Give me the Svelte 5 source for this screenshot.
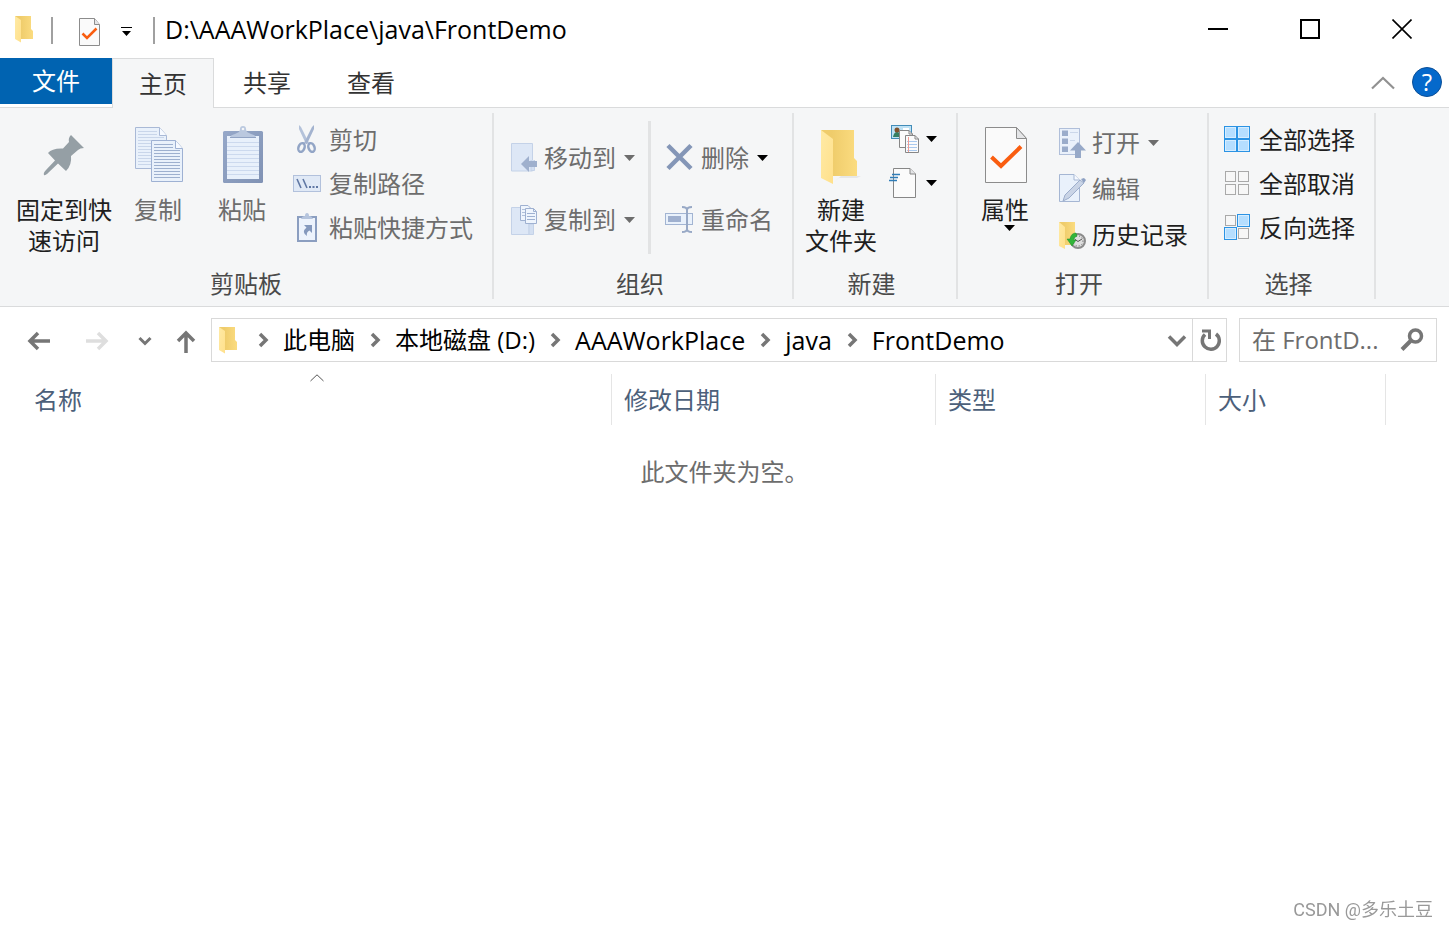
<script lang="ts">
	type Item = { icon: string; label: string; menu?: boolean; off?: boolean };

	const clipboardItems: Item[] = [
		{ icon: 'cut', label: '剪切', off: true },
		{ icon: 'path', label: '复制路径', off: true },
		{ icon: 'shortcut', label: '粘贴快捷方式', off: true }
	];
	const moveItems: Item[] = [
		{ icon: 'move', label: '移动到', menu: true, off: true },
		{ icon: 'copyto', label: '复制到', menu: true, off: true }
	];
	const openItems: Item[] = [
		{ icon: 'open', label: '打开', menu: true, off: true },
		{ icon: 'edit', label: '编辑', off: true },
		{ icon: 'history', label: '历史记录' }
	];
	const selectItems: Item[] = [
		{ icon: 'all', label: '全部选择' },
		{ icon: 'none', label: '全部取消' },
		{ icon: 'invert', label: '反向选择' }
	];

	const crumbs = ['此电脑', '本地磁盘 (D:)', 'AAAWorkPlace', 'java', 'FrontDemo'];
	const tabs = ['主页', '共享', '查看'];

	let activeTab = $state('主页');
	let query = $state('');

	const isLatin = (text: string) => /^[\w ]+$/.test(text);
</script>

{#snippet folder()}
	<svg class="folder" viewBox="0 0 20 28" aria-hidden="true">
		<path d="M1 1H17V14L19 16V24H6z" fill="url(#folder-back)" />
		<path d="M1 1L7 5V27.500L1 24z" fill="url(#folder-front)" />
	</svg>
{/snippet}

{#snippet arrow()}
	<svg class="arrow" viewBox="0 0 11 6" aria-hidden="true">
		<path d="M0 0H11L5.500 6z" fill="currentColor" />
	</svg>
{/snippet}

{#snippet square(x: number, y: number, on: boolean)}
	{#if on}
		<rect x={x - 1} y={y - 1} width="12" height="12" fill="#b5deff" stroke="#2b93e4" />
		<rect {x} {y} width="10" height="10" fill="none" stroke="#d6edff" />
	{:else}
		<rect {x} {y} width="10" height="10" fill="#f7f7f7" stroke="#a9a9a9" />
	{/if}
{/snippet}

{#snippet bigIcon(name: string)}
	<svg class="big-icon" viewBox="0 0 64 64" aria-hidden="true">
		{#if name === 'pin'}
			<path
				d="M39 12L52 25Q48 25 46 27L39 33Q40 42 34 48L26 40.500L15 51Q12 53 12 52Q11 50 14 47L23 37.500L16 30Q20 25 31 25.500L37 19Q36 15 39 12z"
				fill="#959fa5"
			/>
		{:else if name === 'copy'}
			<path d="M9.500 4.500H33.500L40.500 12.500V45.500H9.500z" fill="#e9f1fb" stroke="#a9b9d6" />
			<path d="M33.500 4.500V12.500H40.500" fill="#f7faff" stroke="#a9b9d6" />
			<path d="M12 8.500H31M12 11.500H31M12 14.500H38M12 17.500H38M12 20.500H38M12 23.500H38M12 26.500H38M12 29.500H38M12 32.500H38M12 35.500H38M12 38.500H38M12 41.500H38" stroke="#c9d6ea" />
			<path d="M25.500 17.500H49.500L56.500 25.500V58.500H25.500z" fill="#e9f1fb" stroke="#9eb1d3" />
			<path d="M49.500 17.500V25.500H56.500" fill="#f7faff" stroke="#9eb1d3" />
			<path d="M28 21.500H47M28 24.500H47M28 27.500H54M28 30.500H54M28 33.500H54M28 36.500H54M28 39.500H54M28 42.500H54M28 45.500H54M28 48.500H54M28 51.500H54M28 54.500H54" stroke="#9db0cf" />
		{:else if name === 'paste'}
			<rect x="13" y="8" width="40" height="52" rx="1.500" fill="url(#board)" />
			<rect x="17" y="13" width="32" height="43" fill="#e8f0fb" />
			<path d="M17 19.500H49M17 23.500H49M17 27.500H49M17 31.500H49M17 35.500H49M17 39.500H49M17 43.500H49M17 47.500H49M17 51.500H49" stroke="#ccd9ee" />
			<path d="M20 15Q20 12 25 11L29 9Q30 7 30 6A3 3 0 0 1 36 6Q36 7 37 9L41 11Q46 12 46 15z" fill="#bac8df" />
			<path d="M20 14.500H46" stroke="#91a3c4" />
			<circle cx="33" cy="6" r="1.300" fill="#f5f6f7" />
		{:else if name === 'folder'}
			<path d="M24 60L32 53H52L48 55H30z" fill="#d8d8d8" opacity=".5" />
			<path d="M12 7H45V35L48 38V53H23z" fill="url(#folder-back)" />
			<path d="M12 7L24 16V61L12 55z" fill="url(#folder-front)" />
		{:else}
			<path d="M12.500 4.500H43.500L53.500 15.500V59.500H12.500z" fill="#fafafa" stroke="#8c8c8c" />
			<path d="M43.500 4.500V15.500H53.500z" fill="#e4e5e7" stroke="#8c8c8c" />
			<path d="M18.500 34L28 43L48 23.500" fill="none" stroke="#f95d10" stroke-width="4" />
		{/if}
	</svg>
{/snippet}

{#snippet smallIcon(name: string)}
	<svg class="small-icon" viewBox="0 0 30 30" aria-hidden="true">
		{#if name === 'cut'}
			<path d="M6 0L8 2L16 18L13 19L6 4z" fill="#b4c2da" />
			<path d="M21 0L19 2L11 18L14 19L21 4z" fill="#a3b3cf" />
			<ellipse cx="8.500" cy="22.500" rx="3" ry="4.500" transform="rotate(20 8.500 22.500)" fill="none" stroke="#92a5c6" stroke-width="2.500" />
			<ellipse cx="18.500" cy="22.500" rx="3" ry="4.500" transform="rotate(-20 18.500 22.500)" fill="none" stroke="#92a5c6" stroke-width="2.500" />
		{:else if name === 'path'}
			<rect x=".5" y="6.500" width="27" height="16" fill="#e0e9f6" stroke="#b2c1dc" />
			<path d="M4 10L8 19M10 10L14 19" stroke="#5f77a3" stroke-width="1.600" />
			<path d="M16 18H18M19.500 18H21.500M23 18H25" stroke="#5f77a3" stroke-width="2" />
		{:else if name === 'shortcut'}
			<rect x="5" y="4" width="18" height="24" fill="#edf3fc" stroke="#8b9ec0" stroke-width="2" />
			<path d="M8 6Q9 3 12 3Q12 0 14 0Q16 0 16 3Q19 3 20 6z" fill="#b5c4dd" />
			<path d="M11 12H19V20L16.500 17.500Q13 19 14 23Q8 19 13.500 14.500z" fill="#8599bd" />
		{:else if name === 'move'}
			<path d="M3.500 .5H24.500V28H3.500z" fill="#dde7f6" stroke="#c4d2e8" />
			<path d="M23 17V27.500H26.500V17" fill="#d3dff1" stroke="#c4d2e8" />
			<path d="M13 21L21 13V18H29V24H21V29z" fill="#9fb0cd" />
		{:else if name === 'copyto'}
			<path d="M3.500 2.500H21V29.500H3.500z" fill="#dde7f6" stroke="#c4d2e8" />
			<path d="M21 19H25.500V29.500H21z" fill="#d3dff1" stroke="#c4d2e8" />
			<path d="M12.500 .5H20L23.500 4V15.500H12.500z" fill="#eff5fd" stroke="#9fb1d1" />
			<path d="M14 4.500H18M14 7.500H18M14 10.500H18" stroke="#b1c0da" />
			<path d="M17.500 3.500H25.500L28.500 6.500V18.500H17.500z" fill="#eff5fd" stroke="#9fb1d1" />
			<path d="M25.500 3.500V6.500H28.500M19 8.500H27M19 11.500H27M19 14.500H27" fill="none" stroke="#9fb1d1" />
		{:else if name === 'delete'}
			<path d="M3 2.500L26 25.500M26 2.500L3 25.500" stroke="#8496b7" stroke-width="4.500" />
		{:else if name === 'rename'}
			<rect x=".5" y="8.500" width="27" height="11" fill="#e9f1fb" stroke="#a2b4d2" />
			<rect x="3" y="11" width="13" height="6" fill="#9fb0cf" />
			<path d="M17 2Q22 2 22 5Q22 2 27 2M22 4V25M17 27Q22 27 22 24Q22 27 27 27" fill="none" stroke="#98a9c6" stroke-width="2" />
		{:else if name === 'newitem'}
			<rect x="2.500" y="1.500" width="20" height="13" fill="#bfe2f5" stroke="#428cb8" />
			<path d="M4 13Q5 8 8 8Q11 8 12 13z" fill="#357f63" />
			<circle cx="8" cy="6" r="2.500" fill="#80522e" />
			<path d="M14 5H20" stroke="#fff" stroke-width="2" />
			<path d="M10.500 6.500H20L23.500 10V23.500H10.500z" fill="#fbfbfb" stroke="#878787" />
			<path d="M20 6.500V10H23.500" fill="none" stroke="#878787" />
			<path d="M16.500 11.500H26L29.500 15V28.500H16.500z" fill="#fbfbfb" stroke="#878787" />
			<path d="M26 11.500V15H29.500" fill="none" stroke="#878787" />
			<path d="M18 17.500H28M18 20.500H28M18 23.500H28M18 26.500H28" stroke="#a9c9ee" />
			<path d="M19.500 13V28" stroke="#ef9b93" />
		{:else if name === 'easy'}
			<path d="M4.500 .5H21L26.500 6V29.500H4.500z" fill="#fbfbfb" stroke="#878787" />
			<path d="M21 .5V6H26.500" fill="#e4e5e7" stroke="#878787" />
			<path d="M3 6.500H11M1 9.500H9M0 12.500H8" stroke="#2f7db8" stroke-width="1.600" />
		{:else if name === 'open'}
			<rect x="3.500" y=".5" width="20" height="26" fill="#eaf1fb" stroke="#b0bfda" />
			<path d="M6 2.500H12V8H6zM6 10.500H12V16H6zM6 18.500H12V24H6z" fill="#9aaccb" />
			<path d="M14 4.500H22M14 12.500H19" stroke="#cbd7ea" />
			<path d="M22 14L30 22.500H25V30H19V22.500H14z" fill="#97a9c8" />
		{:else if name === 'edit'}
			<path d="M3.500 .5H18L23.500 6V27.500H3.500z" fill="#e9f1fb" stroke="#a5b6d3" />
			<path d="M18 .5V6H23.500" fill="#f7faff" stroke="#a5b6d3" />
			<path d="M7 27L9 21L24 6L28 9L13 24z" fill="#c9d4e6" stroke="#9cadcb" />
			<path d="M25 5L28 4L30 6L28 9z" fill="#8ea1c3" />
		{:else if name === 'history'}
			<path d="M3 2H19V25H8z" fill="url(#folder-back)" />
			<path d="M3 2L9 7V29L3 26z" fill="url(#folder-front)" />
			<circle cx="22" cy="21" r="7" fill="#dedede" stroke="#8b8b8b" stroke-width="2" />
			<circle cx="22" cy="21" r="5" fill="none" stroke="#666" stroke-dasharray="1 2" />
			<path d="M18.500 19L22 21.500L26 19" fill="none" stroke="#555" />
			<path d="M20 13Q15 13 14 19H11L16 26L20 20H17.500Q18 17 21 16z" fill="#32b53a" stroke="#188d25" stroke-width=".5" />
		{:else}
			{@render square(2.5, 2.5, name === 'all')}
			{@render square(15.5, 2.5, name !== 'none')}
			{@render square(2.5, 15.5, name !== 'none')}
			{@render square(15.5, 15.5, name === 'all')}
		{/if}
	</svg>
{/snippet}

{#snippet small(item: Item)}
	<button class="small" class:off={item.off} type="button">
		{@render smallIcon(item.icon)}
		<span>{item.label}</span>
		{#if item.menu}{@render arrow()}{/if}
	</button>
{/snippet}

{#snippet chevron()}
	<svg class="chevron" viewBox="0 0 12 16" aria-hidden="true">
		<path d="M2 2L8 8L2 14" fill="none" stroke="#767676" stroke-width="3.500" />
	</svg>
{/snippet}

<svg class="defs" aria-hidden="true">
	<defs>
		<linearGradient id="folder-back" x1="0" x2="1" y1="0" y2="0">
			<stop offset=".3" stop-color="#efcc6b" />
			<stop offset="1" stop-color="#fbdc80" />
		</linearGradient>
		<linearGradient id="folder-front" x1="0" x2="1" y1="0" y2="1">
			<stop offset="0" stop-color="#ffeaa5" />
			<stop offset="1" stop-color="#ffe08b" />
		</linearGradient>
		<linearGradient id="board" x1="0" x2="1" y1="0" y2="1">
			<stop offset="0" stop-color="#96a8c9" />
			<stop offset="1" stop-color="#8092b4" />
		</linearGradient>
	</defs>
</svg>

<div class="window">
	<header class="titlebar">
		{@render folder()}
		<span class="rule"></span>
		<button class="quick" type="button" aria-label="属性">
			<svg width="22" height="28" viewBox="0 0 22 28">
				<path d="M.5 .5H15.500L20.500 6.500V27.500H.5z" fill="#fafafa" stroke="#8c8c8c" />
				<path d="M15.500 .5V6.500H20.500" fill="#e4e5e7" stroke="#8c8c8c" />
				<path d="M3.500 15.500L8 20L17.500 10.500" fill="none" stroke="#f95d10" stroke-width="2.500" />
			</svg>
		</button>
		<button class="customize" type="button" aria-label="自定义快速访问工具栏">
			<svg width="12" height="10" viewBox="0 0 12 10"><path d="M0 0H11V1H0zM1 4H10L5.500 9z" /></svg>
		</button>
		<span class="rule"></span>
		<h1>D:\AAAWorkPlace\java\FrontDemo</h1>
		<div class="controls">
			<button type="button" aria-label="最小化">
				<svg width="20" height="20" viewBox="0 0 20 20"><path d="M0 10H20" stroke-width="2" /></svg>
			</button>
			<button type="button" aria-label="最大化">
				<svg width="20" height="20" viewBox="0 0 20 20"><path d="M1 1H19V19H1z" stroke-width="2" /></svg>
			</button>
			<button type="button" aria-label="关闭">
				<svg width="20" height="20" viewBox="0 0 20 20"><path d="M.5 .5L19.500 19.500M19.500 .5L.5 19.500" stroke-width="1.600" /></svg>
			</button>
		</div>
	</header>

	<nav class="tabs">
		<button class="file" type="button">文件</button>
		{#each tabs as tab}
			<button class="tab" class:active={tab === activeTab} type="button" onclick={() => (activeTab = tab)}>
				{tab}
			</button>
		{/each}
		<button class="collapse" type="button" aria-label="最小化功能区">
			<svg width="24" height="14" viewBox="0 0 24 14"><path d="M1 12.500L12 2L23 12.500" fill="none" stroke="#919191" stroke-width="2.200" /></svg>
		</button>
		<button class="help" type="button" aria-label="帮助">?</button>
	</nav>

	<div class="ribbon">
		<section class="group clipboard">
			<div class="items">
				<button class="big pin" type="button">{@render bigIcon('pin')}<span>固定到快<br />速访问</span></button>
				<button class="big off" type="button">{@render bigIcon('copy')}<span>复制</span></button>
				<button class="big off" type="button">{@render bigIcon('paste')}<span>粘贴</span></button>
				<div class="stack">
					{#each clipboardItems as item}{@render small(item)}{/each}
				</div>
			</div>
			<h2>剪贴板</h2>
		</section>

		<section class="group organize">
			<div class="items">
				<div class="stack wide">
					{#each moveItems as item}{@render small(item)}{/each}
				</div>
				<span class="split"></span>
				<div class="stack wide">
					<button class="small off" type="button">
						{@render smallIcon('delete')}
						<span>删除</span>
						<span class="ready">{@render arrow()}</span>
					</button>
					{@render small({ icon: 'rename', label: '重命名', off: true })}
				</div>
			</div>
			<h2>组织</h2>
		</section>

		<section class="group new">
			<div class="items">
				<button class="big" type="button">{@render bigIcon('folder')}<span>新建<br />文件夹</span></button>
				<div class="stack">
					<button class="small" type="button" aria-label="新建项目">{@render smallIcon('newitem')}{@render arrow()}</button>
					<button class="small" type="button" aria-label="轻松访问">{@render smallIcon('easy')}{@render arrow()}</button>
				</div>
			</div>
			<h2>新建</h2>
		</section>

		<section class="group open">
			<div class="items">
				<button class="big" type="button">
					{@render bigIcon('properties')}
					<span>属性</span>
					{@render arrow()}
				</button>
				<div class="stack loose">
					{#each openItems as item}{@render small(item)}{/each}
				</div>
			</div>
			<h2>打开</h2>
		</section>

		<section class="group select">
			<div class="items">
				<div class="stack">
					{#each selectItems as item}{@render small(item)}{/each}
				</div>
			</div>
			<h2>选择</h2>
		</section>
	</div>

	<div class="navbar">
		<button class="step" type="button" aria-label="后退">
			<svg width="24" height="20" viewBox="0 0 24 20"><path d="M11 2L3 10L11 18M3 10H23" fill="none" stroke="#767676" stroke-width="3.500" /></svg>
		</button>
		<button class="step" type="button" aria-label="前进">
			<svg width="24" height="20" viewBox="0 0 24 20"><path d="M13 2L21 10L13 18M21 10H1" fill="none" stroke="#dedede" stroke-width="3.500" /></svg>
		</button>
		<button class="recent" type="button" aria-label="最近浏览的位置">
			<svg width="14" height="10" viewBox="0 0 14 10"><path d="M1.500 2L7 7.500L12.500 2" fill="none" stroke="#767676" stroke-width="3" /></svg>
		</button>
		<button class="up" type="button" aria-label="上移">
			<svg width="20" height="24" viewBox="0 0 20 24"><path d="M2 12L10 4L18 12M10 4V24" fill="none" stroke="#767676" stroke-width="3.500" /></svg>
		</button>

		<div class="address">
			{@render folder()}
			{#each crumbs as crumb}
				{@render chevron()}
				<a class:latin={isLatin(crumb)} href="#{crumb}">{crumb}</a>
			{/each}
			<button class="history" type="button" aria-label="以前的位置">
				<svg width="20" height="14" viewBox="0 0 20 14"><path d="M2 3.500L10 11.500L18 3.500" fill="none" stroke="#767676" stroke-width="3.500" /></svg>
			</button>
			<button class="refresh" type="button" aria-label="刷新">
				<svg width="22" height="24" viewBox="0 0 22 24">
					<path d="M17 6A8.500 8.500 0 1 1 6 6.500" fill="none" stroke="#767676" stroke-width="3.500" />
					<path d="M3 3H10.500V11" fill="none" stroke="#767676" stroke-width="3" />
				</svg>
			</button>
		</div>

		<label class="search">
			<input type="text" aria-label="搜索" placeholder="在 FrontD..." bind:value={query} />
			<svg width="24" height="24" viewBox="0 0 24 24"><circle cx="15.500" cy="8" r="6" fill="none" stroke="#767676" stroke-width="3.500" /><path d="M11.500 12L2 21.500" stroke="#767676" stroke-width="4" /></svg>
		</label>
	</div>

	<table>
		<thead>
			<tr>
				<th class="name">
					名称
					<svg class="sort" width="14" height="8" viewBox="0 0 14 8"><path d="M.5 7L7 .8L13.500 7" fill="none" stroke="#555" /></svg>
				</th>
				<th class="date">修改日期</th>
				<th class="type">类型</th>
				<th class="size">大小</th>
				<td></td>
			</tr>
		</thead>
		<tbody>
			<tr><td class="empty" colspan="5">此文件夹为空。</td></tr>
		</tbody>
	</table>

	<div class="watermark">CSDN @多乐土豆</div>
</div>

<style>
	:global(body) {
		background: #fff;
	}
	.window {
		min-height: 100vh;
		font-family: 'Open Sans', 'Noto Sans CJK SC', sans-serif;
		font-size: 24px;
		line-height: 30px;
		color: #1e1e1e;
	}
	.defs {
		position: absolute;
		width: 0;
		height: 0;
	}
	button {
		border: none;
		background: none;
		padding: 0;
		font: inherit;
		color: inherit;
		white-space: nowrap;
	}
	svg {
		display: block;
		flex: none;
	}
	h1,
	h2 {
		margin: 0;
		font-size: 24px;
		font-weight: 400;
	}
	h1,
	.latin {
		font-size: 25px;
	}
	.folder {
		width: 20px;
		height: 28px;
	}
	.arrow {
		width: 11px;
		height: 6px;
	}

	.titlebar {
		display: flex;
		align-items: center;
		height: 58px;
		padding: 0 1px 0 14px;
		color: #000;
	}
	.rule {
		width: 2px;
		height: 27px;
		margin: 2px 10px 0 17px;
		background: #a0a0a0;
	}
	.quick {
		margin: 6px 4px 0 16px;
	}
	.customize {
		margin: 6px 3px 0 16px;
	}
	.controls {
		display: flex;
		align-self: stretch;
		margin-left: auto;
	}
	.controls button {
		display: grid;
		place-items: center;
		width: 92px;
	}
	.controls path {
		fill: none;
		stroke: #000;
	}

	.tabs {
		display: flex;
		align-items: flex-start;
		height: 50px;
		box-sizing: border-box;
		border-bottom: 1px solid #dadbdc;
	}
	.file {
		width: 112px;
		height: 46px;
		background: #0063b1;
		color: #fff;
	}
	.tab {
		height: 50px;
		padding: 0 28px;
		color: #333;
	}
	.tab.active {
		margin-right: 1px;
		padding: 0 26px;
		border: 1px solid #dadbdc;
		border-bottom: none;
		background: #f5f6f7;
	}
	.collapse {
		margin: 18px 17px 0 auto;
	}
	.help {
		width: 30px;
		height: 30px;
		margin: 9px 7px 0 0;
		border: 1px solid #0b4f98;
		border-radius: 50%;
		background: #0569cb;
		color: #fff;
		line-height: 28px;
	}

	.ribbon {
		display: flex;
		padding: 5px 0 7px 5px;
		background: #f5f6f7;
		border-bottom: 1px solid #dadbdc;
	}
	.group {
		padding-left: 14px;
		border-right: 2px solid #e2e3e4;
	}
	.group.clipboard {
		padding-left: 7px;
	}
	.group.new,
	.group.open {
		padding-left: 5px;
	}
	.group h2 {
		margin-left: -14px;
		padding-right: 6px;
		line-height: 30px;
		text-align: center;
		color: #4a4a4a;
	}
	.group.clipboard h2,
	.group.new h2,
	.group.open h2 {
		margin-left: -6px;
	}
	.items {
		display: flex;
		height: 156px;
		padding-right: 19px;
	}
	.big {
		display: flex;
		flex-direction: column;
		align-items: center;
		width: 84px;
		padding-top: 10px;
		line-height: 31px;
	}
	.big span {
		margin-top: 7px;
	}
	.big .arrow {
		margin-left: 8px;
	}
	.pin {
		width: 104px;
	}
	.big-icon {
		width: 64px;
		height: 64px;
	}
	.off {
		color: #6d6d6d;
	}
	.stack {
		display: flex;
		flex-direction: column;
		padding-top: 5px;
	}
	.big + .stack {
		padding-left: 9px;
	}
	.small {
		display: flex;
		align-items: center;
		gap: 6px;
		height: 44px;
	}
	.small .arrow {
		margin-left: 2px;
	}
	.small-icon {
		width: 30px;
		height: 30px;
	}
	.wide {
		padding-top: 14px;
	}
	.wide .small {
		height: 62px;
	}
	.loose {
		padding-top: 7px;
	}
	.loose .small {
		height: 46px;
	}
	.ready {
		color: #000;
	}
	.new .big + .stack {
		padding: 4px 0 0 6px;
	}
	.new .small .arrow {
		margin-left: 1px;
		color: #000;
	}
	.open .big .arrow {
		color: #000;
	}
	.split {
		width: 3px;
		height: 133px;
		margin: 8px 14px 0 13px;
		background: #e2e3e4;
	}

	.navbar {
		display: flex;
		height: 44px;
		padding: 11px 12px 12px 10px;
	}
	.navbar > button,
	.refresh,
	.history {
		display: grid;
		place-items: center;
	}
	.navbar > button {
		padding-top: 2px;
	}
	.step {
		width: 58px;
	}
	.recent {
		width: 38px;
	}
	.up {
		width: 44px;
		margin-right: 3px;
	}
	.address {
		display: flex;
		flex: 1;
		align-items: center;
		box-sizing: border-box;
		padding-left: 6px;
		border: 1px solid #d9d9d9;
	}
	.address a {
		color: #000;
		text-decoration: none;
		white-space: nowrap;
	}
	.chevron {
		width: 12px;
		height: 16px;
		margin: 0 13px 0 15px;
	}
	.folder + .chevron {
		margin-left: 20px;
	}
	.history {
		margin-left: auto;
		padding: 0 5px;
	}
	.refresh {
		align-self: stretch;
		width: 34px;
		border-left: 1px solid #d9d9d9;
	}
	.search {
		display: flex;
		align-items: center;
		box-sizing: border-box;
		width: 198px;
		margin-left: 12px;
		padding: 0 12px;
		border: 1px solid #d9d9d9;
	}
	.search input {
		flex: 1;
		min-width: 0;
		padding: 0;
		border: none;
		outline: none;
		background: none;
		font: inherit;
		color: #1e1e1e;
	}
	.search input::placeholder {
		color: #6d6d6d;
		opacity: 1;
	}

	table {
		width: 100%;
		border-collapse: separate;
		border-spacing: 0;
		table-layout: fixed;
	}
	th {
		position: relative;
		box-sizing: border-box;
		height: 51px;
		padding: 0 12px;
		border-right: 1px solid #e5e5e5;
		font-weight: 400;
		text-align: left;
		color: #4c607a;
	}
	.name {
		width: 612px;
		padding-left: 34px;
	}
	.date {
		width: 324px;
	}
	.type {
		width: 270px;
	}
	.size {
		width: 180px;
	}
	.sort {
		position: absolute;
		top: 0;
		left: 310px;
	}
	.empty {
		padding: 32px 0 0;
		text-align: center;
		color: #6d6d6d;
	}
	.watermark {
		position: fixed;
		right: 16px;
		bottom: 6px;
		font-family: Roboto, 'Noto Sans CJK SC', sans-serif;
		font-size: 18px;
		line-height: 24px;
		color: #999;
	}
</style>
